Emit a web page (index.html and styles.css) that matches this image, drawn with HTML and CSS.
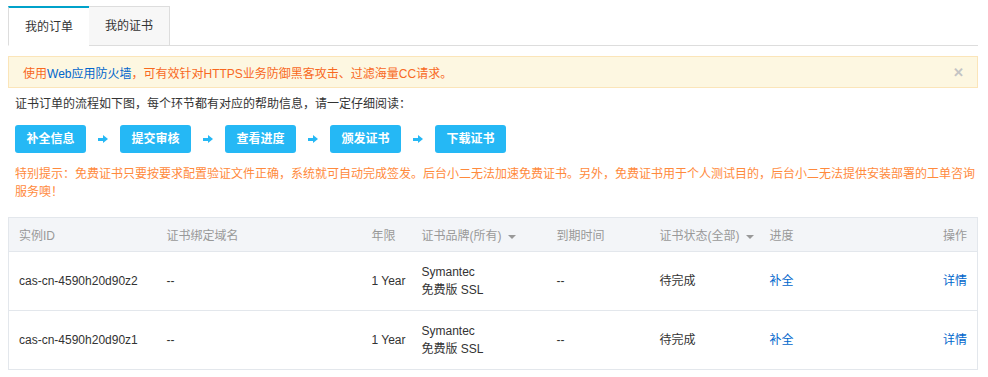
FILE: index.html
```html
<!DOCTYPE html>
<html lang="zh-CN">
<head>
    <meta charset="UTF-8">
    <title>SSL证书</title>
    <link rel="stylesheet" href="styles.css">
</head>
<body>
    <div class="page">
        <div class="tabs">
            <div class="tab active">我的订单</div>
            <div class="tab">我的证书</div>
        </div>

        <div class="alert">
            <span>使用<a class="link">Web应用防火墙</a>，可有效针对HTTPS业务防御黑客攻击、过滤海量CC请求。</span>
            <span class="close">&#x2715;</span>
        </div>

        <p class="intro">证书订单的流程如下图，每个环节都有对应的帮助信息，请一定仔细阅读：</p>

        <div class="steps">
            <span class="step">补全信息</span>
            <span class="arrow"></span>
            <span class="step">提交审核</span>
            <span class="arrow"></span>
            <span class="step">查看进度</span>
            <span class="arrow"></span>
            <span class="step">颁发证书</span>
            <span class="arrow"></span>
            <span class="step">下载证书</span>
        </div>

        <p class="notice">特别提示：免费证书只要按要求配置验证文件正确，系统就可自动完成签发。后台小二无法加速免费证书。另外，免费证书用于个人测试目的，后台小二无法提供安装部署的工单咨询服务噢！</p>

        <table class="orders">
            <colgroup>
                <col style="width:148px">
                <col style="width:205px">
                <col style="width:50px">
                <col style="width:135px">
                <col style="width:103px">
                <col style="width:110px">
                <col style="width:120px">
                <col>
            </colgroup>
            <thead>
                <tr>
                    <th>实例ID</th>
                    <th>证书绑定域名</th>
                    <th>年限</th>
                    <th>证书品牌(所有) <i class="caret"></i></th>
                    <th>到期时间</th>
                    <th>证书状态(全部) <i class="caret"></i></th>
                    <th>进度</th>
                    <th class="right">操作</th>
                </tr>
            </thead>
            <tbody>
                <tr>
                    <td>cas-cn-4590h20d90z2</td>
                    <td>--</td>
                    <td>1 Year</td>
                    <td>Symantec<br>免费版 SSL</td>
                    <td>--</td>
                    <td>待完成</td>
                    <td><a class="link">补全</a></td>
                    <td class="right"><a class="link">详情</a></td>
                </tr>
                <tr>
                    <td>cas-cn-4590h20d90z1</td>
                    <td>--</td>
                    <td>1 Year</td>
                    <td>Symantec<br>免费版 SSL</td>
                    <td>--</td>
                    <td>待完成</td>
                    <td><a class="link">补全</a></td>
                    <td class="right"><a class="link">详情</a></td>
                </tr>
            </tbody>
        </table>
    </div>
</body>
</html>
```

FILE: styles.css
```css
* {
    margin: 0;
    padding: 0;
    box-sizing: border-box;
}

body {
    font-family: 'Liberation Sans', 'Noto Sans CJK SC', sans-serif;
    font-size: 12px;
    color: #333;
    background: #fff;
}

.page {
    padding: 6px 10px 0 8px;
}

.tabs {
    display: flex;
    border-bottom: 1px solid #ddd;
    height: 40px;
}

.tab {
    width: 81px;
    height: 40px;
    line-height: 38px;
    text-align: center;
    color: #333;
    background: #f7f7f7;
    border: 1px solid #ddd;
    border-left: none;
}

.tab.active {
    background: #fff;
    border-left: 1px solid #ddd;
    border-top: 2px solid #00a2ca;
    border-bottom: 1px solid #fff;
    border-right: none;
    height: 40px;
}

.alert {
    margin-top: 10px;
    height: 32px;
    display: flex;
    align-items: center;
    justify-content: space-between;
    padding: 0 13px 0 14px;
    background: #fdf7e1;
    border: 1px solid #fbe5b9;
    color: #f8691f;
}

.link {
    color: #0066cc;
    text-decoration: none;
    cursor: pointer;
}

.close {
    color: #c4c4c4;
    font-size: 13px;
    font-weight: bold;
}

.intro {
    margin-top: 7px;
    padding-left: 7px;
    line-height: 18px;
}

.steps {
    margin-top: 12px;
    padding-left: 7px;
    display: flex;
    align-items: center;
}

.step {
    display: inline-block;
    width: 71px;
    height: 28px;
    line-height: 28px;
    text-align: center;
    background: #25b8f5;
    color: #fff;
    font-weight: bold;
    border-radius: 3px;
}

.arrow {
    position: relative;
    width: 10px;
    height: 8px;
    margin: 0 12px;
}

.arrow::before {
    content: '';
    position: absolute;
    left: 0;
    top: 3px;
    width: 6px;
    height: 3px;
    background: #25b8f5;
}

.arrow::after {
    content: '';
    position: absolute;
    left: 5px;
    top: 0;
    border-top: 4.5px solid transparent;
    border-bottom: 4.5px solid transparent;
    border-left: 5px solid #25b8f5;
}

.notice {
    margin-top: 12px;
    padding-left: 7px;
    max-width: 975px;
    line-height: 18px;
    color: #ff8a3c;
}

.orders {
    margin-top: 16px;
    width: 970px;
    border-collapse: collapse;
    table-layout: fixed;
    border: 1px solid #e3e7ec;
}

.orders th {
    height: 34px;
    background: #f3f5f8;
    color: #999;
    font-weight: normal;
    text-align: left;
    padding: 0 10px;
    border-bottom: 1px solid #e3e7ec;
    white-space: nowrap;
}

.orders td {
    height: 59px;
    padding: 0 10px;
    line-height: 18px;
    border-bottom: 1px solid #e3e7ec;
    white-space: nowrap;
}

.orders .right {
    text-align: right;
}

.caret {
    display: inline-block;
    vertical-align: middle;
    margin-left: 3px;
    border-left: 4px solid transparent;
    border-right: 4px solid transparent;
    border-top: 4px solid #999;
}
```
